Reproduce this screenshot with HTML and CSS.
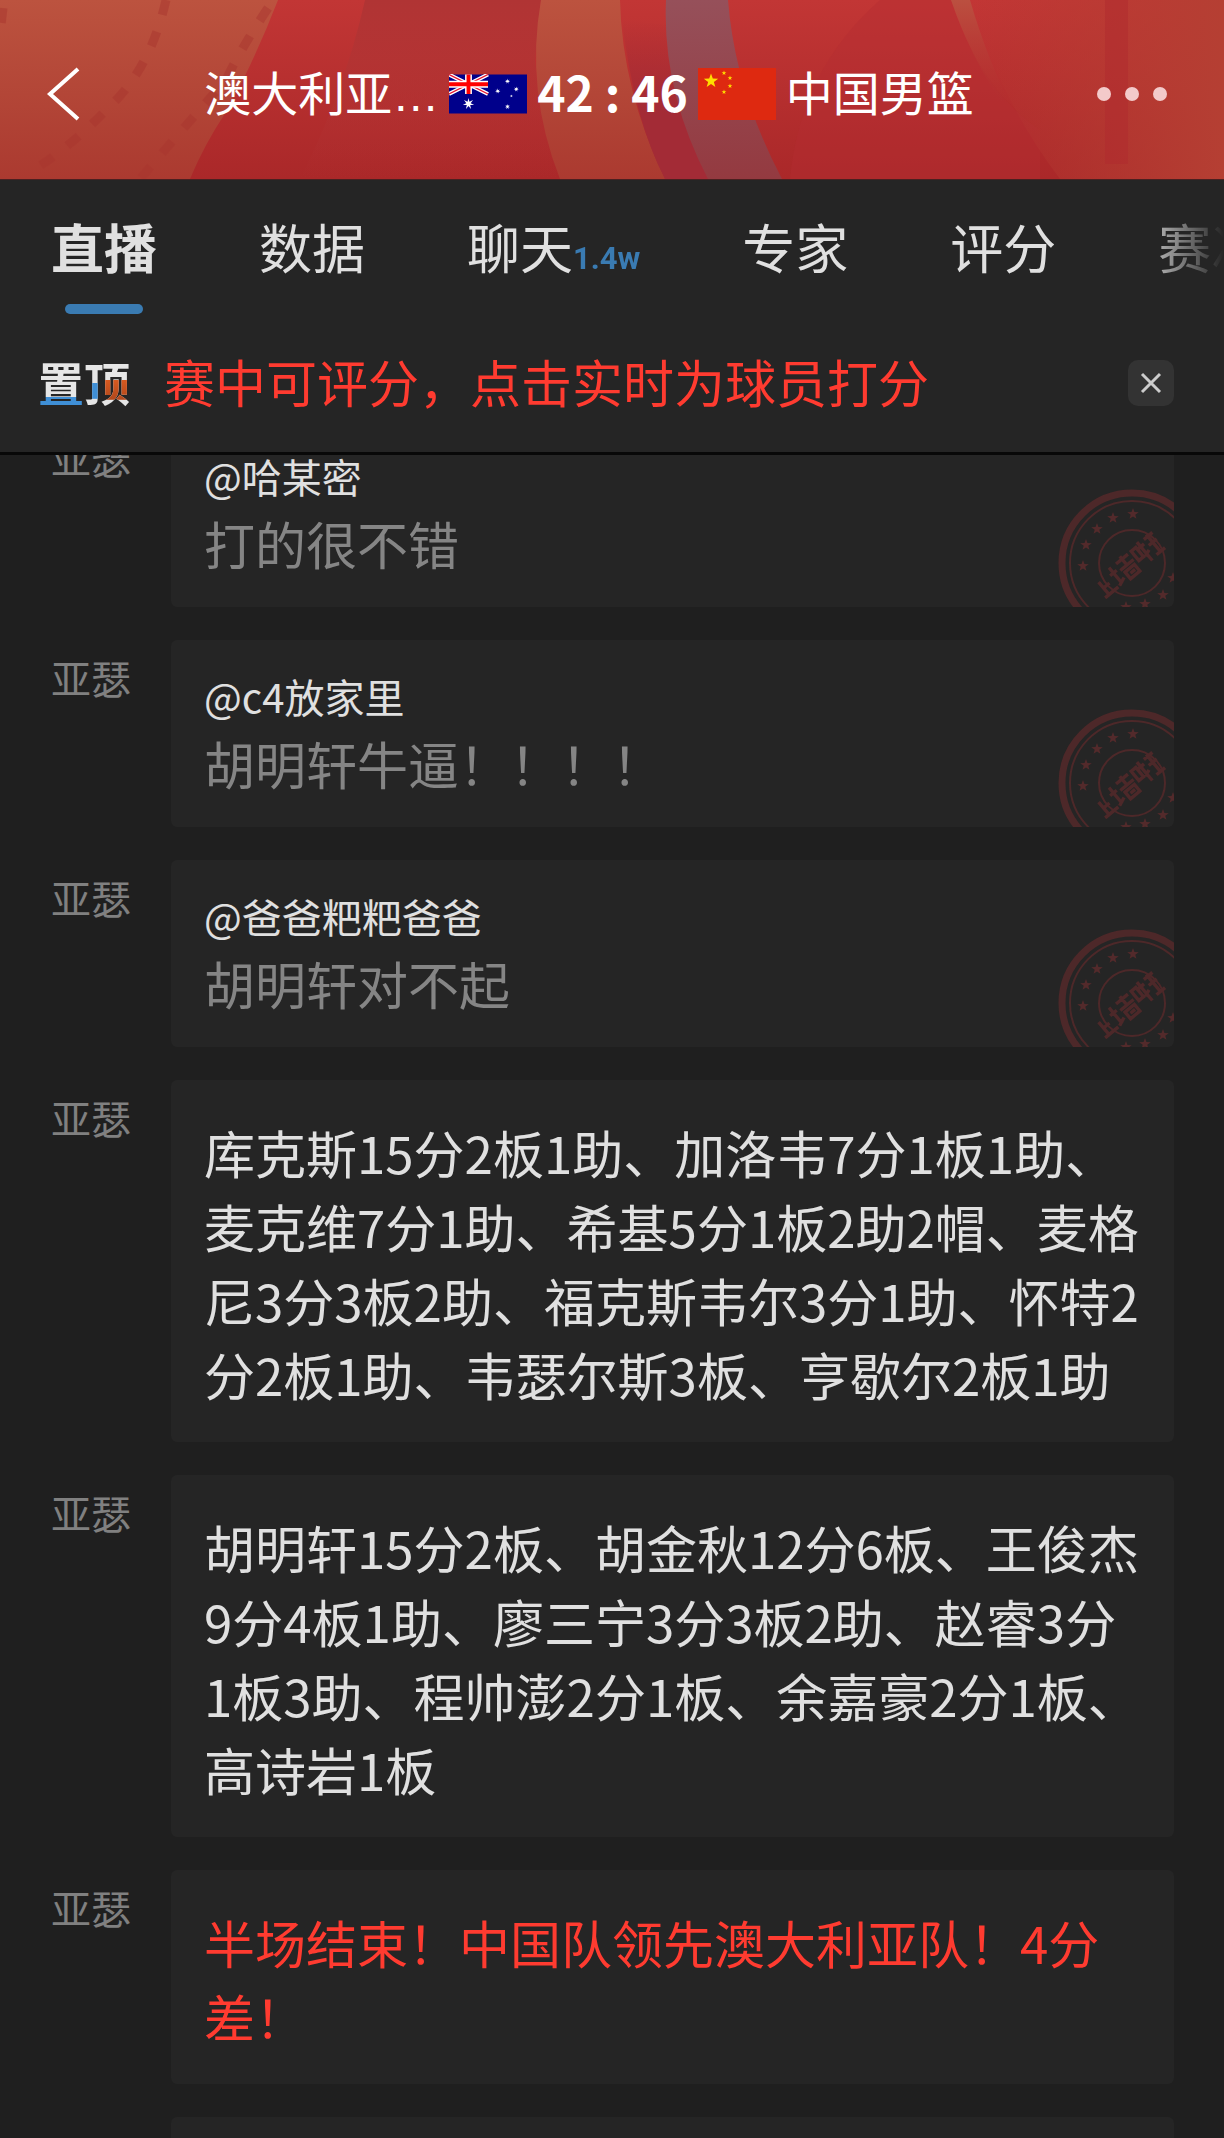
FILE: index.html
```
<!DOCTYPE html>
<html lang="zh-CN">
<head>
  <meta charset="UTF-8">
  <meta name="viewport" content="width=device-width, initial-scale=1.0">
  <title>澳大利亚 42 : 46 中国男篮</title>
  <link rel="stylesheet" href="styles.css">
</head>
<body>
  <svg class="defs" aria-hidden="true">
    <defs>
      <path id="star" d="M0-5L1.2-1.6 4.8-1.5 1.9.6 2.9 4 0 2-2.9 4-1.9.6-4.8-1.5-1.2-1.6z"/>
      <path id="star7" d="M0-10L1.6-3.4 7.8-6.2 3.7-.8 9.7 2.2 2.9 2.3 4.3 9 0 3.8-4.3 9-2.9 2.3-9.7 2.2-3.7-.8-7.8-6.2-1.6-3.4z"/>
      <symbol id="seal" viewBox="0 0 118 120">
        <g fill="none" stroke="#4d2829">
          <circle cx="76" cy="76" r="70" stroke-width="7"/>
          <circle cx="76" cy="76" r="62" stroke-width="2"/>
          <circle cx="76" cy="76" r="33" stroke-width="2"/>
          <g transform="translate(76 76) rotate(-40) scale(.86) translate(-84 -75)" stroke-width="4">
            <path d="M40 67v18M40 76h9M34 86h20"/>
            <path d="M60 62v24M55 70h10M56 86l10-4M69 64h18M78 60v13M68 73h20M71 78h14v10h-14zM75 83h7"/>
            <path d="M92 64h7v14h-7zM104 60v28M101 67h8M101 79l8-3M112 63h13M118 60v27M112 72h12M112 86h13"/>
          </g>
        </g>
        <g fill="#532a2b">
          <use href="#star" transform="translate(27 79) scale(1.2)"/>
          <use href="#star" transform="translate(30 58) scale(1.2)"/>
          <use href="#star" transform="translate(41 42) scale(1.2)"/>
          <use href="#star" transform="translate(57 31) scale(1.2)"/>
          <use href="#star" transform="translate(77 27) scale(1.2)"/>
          <use href="#star" transform="translate(107 108) scale(1.2)"/>
          <use href="#star" transform="translate(89 117) scale(1.2)"/>
          <use href="#star" transform="translate(70 120) scale(1.2)"/>
          <use href="#star" transform="translate(117 91) scale(1.2)"/>
        </g>
      </symbol>
    </defs>
  </svg>

  <div class="top">
    <header class="match">
      <svg class="match-bg" viewBox="0 0 1224 179" preserveAspectRatio="none" aria-hidden="true">
        <defs>
          <linearGradient id="tan" x1="0" y1="0" x2="0" y2="1">
            <stop offset="0" stop-color="#bc533f"/>
            <stop offset="1" stop-color="#ab3a30"/>
          </linearGradient>
          <linearGradient id="mauve" x1="0" y1="0" x2="0" y2="1">
            <stop offset="0" stop-color="#96505a"/>
            <stop offset="1" stop-color="#943a40"/>
          </linearGradient>
          <linearGradient id="ray" x1="0" y1="0" x2="0" y2="1">
            <stop offset="0" stop-color="#bb5040"/>
            <stop offset="1" stop-color="#b02d2d" stop-opacity="0"/>
          </linearGradient>
          <linearGradient id="edge" x1="0" y1="0" x2="1" y2="0">
            <stop offset="0" stop-color="#b53c32" stop-opacity="0"/>
            <stop offset="1" stop-color="#b53f33"/>
          </linearGradient>
          <linearGradient id="shade" x1="0" y1="0" x2="0" y2="1">
            <stop offset="0" stop-color="#b03434"/>
            <stop offset="1" stop-color="#b03434" stop-opacity="0"/>
          </linearGradient>
          <linearGradient id="wine" x1="0" y1="0" x2="0" y2="1">
            <stop offset="0" stop-color="#a32b36" stop-opacity="0"/>
            <stop offset=".6" stop-color="#a32b36"/>
          </linearGradient>
        </defs>
        <path fill="url(#tan)" d="M0 0H278Q254 62 226 112 204 145 190 179H0z"/>
        <path fill="url(#shade)" d="M365 0H541L535 60Q540 125 560 179H300Q345 90 365 0z"/>
        <path fill="url(#tan)" d="M541 0H620Q622 90 665 179H560Q525 90 541 0z"/>
        <path fill="url(#wine)" d="M622 20L668 25Q680 120 710 179H665Q634 120 622 20z"/>
        <path fill="url(#mauve)" d="M666 0H728Q735 90 782 179H708Q662 90 666 0z"/>
        <path fill="#b32c31" opacity=".4" d="M880 0H951Q980 90 1040 130V179H790Q800 70 880 0z"/>
        <path fill="url(#ray)" d="M951 0H970Q988 62 1014 110L1000 100Q970 55 951 0z"/>
        <path fill="url(#edge)" d="M970 0H1224V179H1060Q1000 100 970 0z"/>
        <path fill="#b02a2e" opacity=".5" d="M1105 0H1128V164H1105z"/>
        <g fill="none" stroke="#a9362f" stroke-width="9" stroke-dasharray="15 18" opacity=".5">
          <path d="M166 0Q150 70 108 108 70 148 30 172"/>
          <path d="M268 8Q240 50 226 80 180 132 140 179"/>
          <path d="M3 8L0 34"/>
        </g>
      </svg>
      <button class="back" aria-label="返回">
        <svg width="34" height="56" viewBox="0 0 34 56"><path d="M32 3L4 28 32 53" fill="none" stroke="#fff" stroke-width="4"/></svg>
      </button>
      <div class="teams">
        <span class="team">澳大利亚<span class="dots">…</span></span>
        <svg class="flag-au" viewBox="0 0 80 40" role="img" aria-label="澳大利亚国旗">
          <path fill="#00008b" d="M0 0h80v40H0z"/>
          <path stroke="#fff" stroke-width="4" d="M0 0l40 20M40 0L0 20"/>
          <path stroke="#e8112d" stroke-width="1.4" d="M0 0l40 20M40 0L0 20"/>
          <path stroke="#fff" stroke-width="7" d="M20 0v20M0 10h40"/>
          <path stroke="#f00" stroke-width="4" d="M20 0v20M0 10h40"/>
          <g fill="#fff">
            <use href="#star7" transform="translate(20 30) scale(.6)"/>
            <use href="#star7" transform="translate(60 7) scale(.28)"/>
            <use href="#star7" transform="translate(50 17) scale(.28)"/>
            <use href="#star7" transform="translate(69 15) scale(.28)"/>
            <use href="#star7" transform="translate(60 33) scale(.28)"/>
            <use href="#star7" transform="translate(64 22) scale(.16)"/>
          </g>
        </svg>
        <span class="score">42 : 46</span>
        <svg class="flag-cn" viewBox="0 0 78 52" role="img" aria-label="中国国旗">
          <path fill="#de2910" d="M0 0h78v52H0z"/>
          <g fill="#ffde00">
            <use href="#star" transform="translate(13 13) scale(1.5)"/>
            <use href="#star" transform="translate(26 5) scale(.5)"/>
            <use href="#star" transform="translate(32 10) scale(.5)"/>
            <use href="#star" transform="translate(32 18) scale(.5)"/>
            <use href="#star" transform="translate(26 24) scale(.5)"/>
          </g>
        </svg>
        <span class="team">中国男篮</span>
      </div>
      <button class="more" aria-label="更多">
        <svg width="72" height="16" viewBox="0 0 72 16" fill="#f3caca"><circle cx="8" cy="8" r="7"/><circle cx="36" cy="8" r="7"/><circle cx="64" cy="8" r="7"/></svg>
      </button>
    </header>

    <nav class="tabs">
      <a class="tab active" href="#">直播</a>
      <a class="tab" href="#">数据</a>
      <a class="tab" href="#">聊天<span class="count">1.4w</span></a>
      <a class="tab" href="#">专家</a>
      <a class="tab" href="#">评分</a>
      <a class="tab" href="#">赛况</a>
    </nav>

    <div class="pinned">
      <span class="pin-tag">置<span class="pin-end">顶</span></span>
      <a class="pin-text" href="#">赛中可评分，点击实时为球员打分</a>
      <button class="close" aria-label="关闭">
        <svg width="22" height="22" viewBox="0 0 22 22"><path d="M2 2l18 18M20 2L2 20" stroke="#ccc" stroke-width="3"/></svg>
      </button>
    </div>
  </div>

  <main class="feed">
    <article class="row">
      <span class="author">亚瑟</span>
      <div class="card quote">
        <p class="user">@哈某密</p>
        <p class="said">打的很不错</p>
        <svg class="seal"><use href="#seal"/></svg>
      </div>
    </article>
    <article class="row">
      <span class="author">亚瑟</span>
      <div class="card quote">
        <p class="user">@c4放家里</p>
        <p class="said">胡明轩牛逼！！！！</p>
        <svg class="seal"><use href="#seal"/></svg>
      </div>
    </article>
    <article class="row">
      <span class="author">亚瑟</span>
      <div class="card quote">
        <p class="user">@爸爸粑粑爸爸</p>
        <p class="said">胡明轩对不起</p>
        <svg class="seal"><use href="#seal"/></svg>
      </div>
    </article>
    <article class="row">
      <span class="author">亚瑟</span>
      <div class="card">
        <p class="text">库克斯15分2板1助、加洛韦7分1板1助、麦克维7分1助、希基5分1板2助2帽、麦格尼3分3板2助、福克斯韦尔3分1助、怀特2分2板1助、韦瑟尔斯3板、亨歇尔2板1助</p>
      </div>
    </article>
    <article class="row">
      <span class="author">亚瑟</span>
      <div class="card">
        <p class="text">胡明轩15分2板、胡金秋12分6板、王俊杰9分4板1助、廖三宁3分3板2助、赵睿3分1板3助、程帅澎2分1板、余嘉豪2分1板、高诗岩1板</p>
      </div>
    </article>
    <article class="row">
      <span class="author">亚瑟</span>
      <div class="card">
        <p class="text key">半场结束！中国队领先澳大利亚队！4分差！</p>
      </div>
    </article>
    <article class="row">
      <div class="card"></div>
    </article>
  </main>
</body>
</html>
```
FILE: styles.css
```
* {
  box-sizing: border-box;
}
body {
  margin: 0;
  height: 100vh;
  overflow: hidden;
  display: flex;
  flex-direction: column;
  background: #1f1f1f;
  color: #e0e0e0;
  font-family: "Noto Sans CJK SC", sans-serif;
}
p {
  margin: 0;
}
a {
  color: inherit;
  text-decoration: none;
}
button {
  padding: 0;
  border: none;
  background: none;
  cursor: pointer;
}
svg {
  display: block;
}
.defs {
  position: absolute;
  width: 0;
  height: 0;
}

/* header */
.top {
  position: relative;
  z-index: 1;
  flex: none;
  background: #252525;
  border-bottom: 3px solid #080808;
}
.match {
  position: relative;
  display: flex;
  align-items: center;
  height: 180px;
  padding-top: 8px;
  background: linear-gradient(#c23635, #aa2829);
  border-bottom: 1px solid #4a2020;
  color: #fff;
}
.match-bg {
  position: absolute;
  inset: 0;
  width: 100%;
  height: 100%;
}
.back, .teams, .more {
  position: relative;
}
.back {
  width: 88px;
  padding-left: 46px;
}
.teams {
  flex: 1;
  display: flex;
  align-items: center;
  justify-content: center;
  gap: 10px;
  white-space: nowrap;
}
.team, .score {
  padding-bottom: 5px;
  line-height: 64px;
}
.team {
  font-size: 47px;
}
.dots {
  font-family: "Liberation Sans", sans-serif;
  line-height: 1;
}
.flag-au {
  width: 78px;
  height: 40px;
}
.flag-cn {
  width: 78px;
  height: 52px;
}
.score {
  font-size: 48px;
  font-weight: 700;
}
.more {
  width: 134px;
  padding-left: 6px;
}

/* tabs */
.tabs {
  display: flex;
  gap: 102px;
  height: 140px;
  padding: 28px 0 0 51px;
  overflow: hidden;
  white-space: nowrap;
  mask-image: linear-gradient(to left, transparent, #000 90px);
}
.tab {
  flex: none;
  font-size: 53px;
  line-height: 76px;
}
.tab.active {
  font-weight: 700;
}
.tab.active::after {
  content: "";
  display: block;
  width: 78px;
  height: 10px;
  margin: 20px auto 0;
  border-radius: 5px;
  background: #3a7bb2;
}
.count {
  color: #3a7bb2;
  font-family: Roboto, "Liberation Sans", sans-serif;
  font-size: 31px;
  font-weight: 700;
  line-height: 1;
}

/* pinned notice */
.pinned {
  display: flex;
  align-items: center;
  gap: 34px;
  height: 132px;
  padding: 0 50px 6px 38px;
}
.pin-tag {
  margin-bottom: 5px;
  font-size: 46px;
  font-weight: 700;
  line-height: 60px;
  color: transparent;
  background: linear-gradient(#e6e6e6 46px, #3f8fd6 46px) 0 0 / 46px 100% no-repeat;
  background-clip: text;
}
.pin-end {
  background:
    linear-gradient(#3f8fd6, #3f8fd6) 0 70% / 40% 24% no-repeat,
    linear-gradient(#d85a20, #b0481c) 100% 70% / 60% 30% no-repeat,
    #e6e6e6;
  background-clip: text;
}
.pin-text {
  flex: 1;
  padding-bottom: 5px;
  color: #ff3b30;
  font-size: 51px;
  line-height: 74px;
}
.close {
  display: flex;
  align-items: center;
  justify-content: center;
  width: 46px;
  height: 46px;
  border-radius: 10px;
  background: #333;
}

/* live feed, scrolled slightly under the header */
.feed {
  display: flex;
  flex-direction: column;
  gap: 33px;
  margin-top: -35px;
  padding: 0 50px 0 51px;
}
.row {
  display: flex;
  justify-content: flex-end;
}
.author {
  flex: none;
  width: 120px;
  padding-top: 8px;
  color: #808080;
  font-size: 40px;
  line-height: 58px;
}
.card {
  position: relative;
  flex: 1;
  padding: 35px 33px 31px;
  overflow: hidden;
  border-radius: 6px;
  background: #252525;
}
.row:last-child .card {
  margin-left: 120px;
}
.quote {
  padding: 26px 33px 27px;
}
.user {
  font-size: 40px;
  line-height: 60px;
}
.said {
  color: #858585;
  font-size: 51px;
  line-height: 74px;
}
.text {
  font-size: 51px;
  line-height: 74px;
}
.key {
  color: #ff3b30;
}
.seal {
  position: absolute;
  right: 0;
  bottom: 0;
  width: 118px;
  height: 120px;
}
```
